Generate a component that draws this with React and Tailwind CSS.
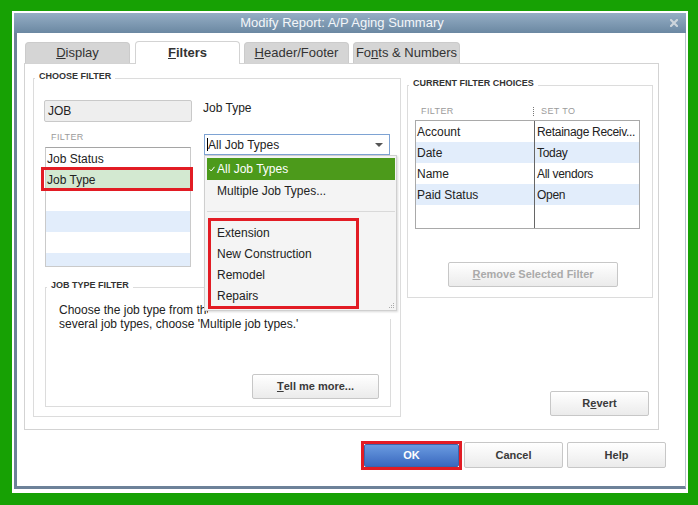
import React from 'react';

const listRows = [
  { label: 'Job Status', tone: 'white' },
  { label: 'Job Type', tone: 'selected' },
  { label: '', tone: 'white' },
  { label: '', tone: 'blue' },
  { label: '', tone: 'white' },
  { label: '', tone: 'blue' },
];

const currentFilters = [
  { filter: 'Account', setTo: 'Retainage Receiv...' },
  { filter: 'Date', setTo: 'Today' },
  { filter: 'Name', setTo: 'All vendors' },
  { filter: 'Paid Status', setTo: 'Open' },
];

const jobTypes = ['Extension', 'New Construction', 'Remodel', 'Repairs'];

function Btn({ className = '', disabled, children }) {
  return (
    <div
      className={`flex items-center justify-center rounded-[2px] border border-[#c7c7c7] bg-linear-to-b from-white to-[#ebebeb] text-[11px] font-bold ${
        disabled ? 'text-[#aaaaaa]' : 'text-[#3a3a3a]'
      } ${className}`}
    >
      {children}
    </div>
  );
}

function Legend({ children }) {
  return (
    <legend className="ml-[1px] px-[4px] pb-[5px] text-[9px] leading-[10px] font-bold text-[#333]">
      {children}
    </legend>
  );
}

function Tab({ active, className = '', children }) {
  return (
    <div
      className={`flex items-center justify-center rounded-t-[4px] text-[13px] text-[#333] ${
        active
          ? 'relative z-10 -mb-px h-[23px] border border-b-0 border-[#d3d3d3] bg-white font-bold'
          : 'h-[21px] border border-b-0 border-[#cbcbcb] bg-[#d5d5d5]'
      } ${className}`}
    >
      {children}
    </div>
  );
}

export default function App() {
  return (
    <div className="w-[698px] h-[505px] bg-[#17a104] pt-[11px] pl-[12px] pr-[10px] pb-[12px] font-[Liberation_Sans,Arial,sans-serif] text-[12px] text-[#222]">
      <div className="h-full bg-white p-[2px] pb-[4px]">
        <div className="h-full flex flex-col">
          {/* Title bar */}
          <div className="h-[20px] shrink-0 flex items-center bg-linear-to-b from-[#95aec5] to-[#6b88a2]">
            <div className="flex-1 text-center text-[13px] text-[#f3f6f9]">Modify Report: A/P Aging Summary</div>
            <div className="w-[16px] flex items-center">
              <svg width="8" height="8" viewBox="0 0 8 8">
                <path d="M1 1L7 7M7 1L1 7" stroke="#cdd5dc" strokeWidth="2.2" strokeLinecap="square" />
              </svg>
            </div>
          </div>

          {/* Body */}
          <div className="flex-1 flex flex-col border-l-[3px] border-b-[3px] border-r border-l-[#6d8299] border-b-[#6d8299] border-r-[#b9c3cd] pt-[8px] pl-[7px]">
            {/* Tabs */}
            <div className="flex items-end h-[22px] pl-[1px]">
              <Tab className="w-[105px]">
                <span className="underline">D</span>isplay
              </Tab>
              <Tab active className="ml-[5px] w-[105px]">
                <span className="underline">F</span>ilters
              </Tab>
              <Tab className="ml-[4px] w-[105px]">
                <span className="underline">H</span>eader/Footer
              </Tab>
              <Tab className="ml-[4px] w-[107px]">
                Fo<span className="underline">n</span>ts &amp; Numbers
              </Tab>
            </div>

            {/* Tab panel */}
            <div className="w-[635px] h-[367px] border border-[#d3d3d3] flex pt-[7px] pl-[8px] pb-[12px]">
              {/* Choose filter */}
              <fieldset className="w-[368px] h-[346px] border border-[#dcdcdc]">
                <Legend>CHOOSE FILTER</Legend>
                <div className="flex items-start mt-[14px] ml-[10px]">
                  <div className="w-[148px] h-[22px] bg-[#eeeeee] border border-[#c9c9c9] rounded-[2px] flex items-center pl-[3px]">
                    JOB
                  </div>
                  <div className="ml-[11px] mt-[1px] leading-[14px]">Job Type</div>
                </div>

                <div className="flex ml-[11px]">
                  <div className="relative w-[146px]">
                    <div className="mt-[10px] pl-[6px] text-[9px] leading-[10px] text-[#9b9b9b] tracking-[0.4px]">FILTER</div>
                    <div className="mt-[5px] h-[120px] border border-[#cacaca] border-t-[#a5a5a5] overflow-hidden">
                      {listRows.map((row, i) => (
                        <div
                          key={i}
                          className={`h-[21px] flex items-center pl-[1px] ${
                            row.tone === 'blue' ? 'bg-[#e2edfb]' : row.tone === 'selected' ? 'bg-[#d3e9d1]' : 'bg-white'
                          }`}
                        >
                          {row.label}
                        </div>
                      ))}
                    </div>
                    <div className="absolute left-[-4px] top-[45px] w-[152px] h-[24px] border-[3px] border-[#e21c24]" />
                  </div>

                  <div className="relative ml-[13px] mt-[12px]">
                    <div className="w-[186px] h-[21px] border border-[#7ea3d3] bg-white flex items-center pl-[2px]">
                      <span className="w-px h-[13px] bg-black" />
                      <span>All Job Types</span>
                      <svg className="ml-auto mr-[6px]" width="8" height="4" viewBox="0 0 8 4">
                        <path d="M0 0H8L4 4Z" fill="#555" />
                      </svg>
                    </div>

                    {/* Open dropdown (popup, with its blank shadow strip below) */}
                    <div className="absolute left-0 top-[21px] z-20 w-[194px]">
                      <div className="relative w-[193px] h-[156px] bg-[#f4f4f4] border border-[#cfcfcf] shadow-[1px_1px_2px_rgba(0,0,0,0.15)] pt-[2px] pl-[2px] pr-[1px]">
                        <div className="h-[22px] bg-[#4c9a1b] text-white flex items-center">
                          <span className="w-[10px] flex justify-center">
                            <svg width="6" height="6" viewBox="0 0 6 6">
                              <path d="M0.5 3.2L2.2 5L5.5 0.8" stroke="white" strokeWidth="1" fill="none" />
                            </svg>
                          </span>
                          <span>All Job Types</span>
                        </div>
                        <div className="h-[21px] flex items-center pl-[10px]">Multiple Job Types...</div>
                        <div className="mt-[10px] h-px bg-[#d9d9d9]" />
                        <div className="mt-[10px]">
                          {jobTypes.map((t) => (
                            <div key={t} className="h-[21px] flex items-center pl-[10px]">
                              {t}
                            </div>
                          ))}
                        </div>
                        <div className="absolute left-[3px] top-[62px] w-[151px] h-[91px] border-[3px] border-[#e21c24]" />
                        <svg className="absolute right-[1px] bottom-[1px]" width="6" height="6" viewBox="0 0 6 6">
                          <rect x="4" y="0" width="1" height="1" fill="#aaa" />
                          <rect x="2" y="2" width="1" height="1" fill="#aaa" />
                          <rect x="4" y="2" width="1" height="1" fill="#aaa" />
                          <rect x="0" y="4" width="1" height="1" fill="#aaa" />
                          <rect x="2" y="4" width="1" height="1" fill="#aaa" />
                          <rect x="4" y="4" width="1" height="1" fill="#aaa" />
                        </svg>
                      </div>
                      <div className="ml-[4px] h-[8px] bg-white" />
                    </div>
                  </div>
                </div>

                {/* Job type filter help */}
                <fieldset className="ml-[11px] mt-[13px] w-[346px] h-[127px] border border-[#dcdcdc]">
                  <Legend>JOB TYPE FILTER</Legend>
                  <div className="h-[111px] flex flex-col">
                    <p className="mt-[8px] pl-[13px] w-[333px] leading-[14px]">
                      Choose the job type from the drop-down list. To select several job types, choose 'Multiple job types.'
                    </p>
                    <Btn className="mt-auto mb-[7px] self-end mr-[11px] w-[127px] h-[25px]">
                      <span className="underline">T</span>ell me more...
                    </Btn>
                  </div>
                </fieldset>
              </fieldset>

              {/* Current filter choices */}
              <div className="ml-[6px] w-[251px] flex flex-col">
                <fieldset className="mt-[7px] w-[246px] h-[220px] border border-[#dcdcdc]">
                  <Legend>CURRENT FILTER CHOICES</Legend>
                  <div className="mt-[13px] ml-[7px] w-[225px]">
                    <div className="flex items-center h-[10px] text-[9px] leading-[10px] text-[#9b9b9b] tracking-[0.4px]">
                      <div className="w-[118px] pl-[6px]">FILTER</div>
                      <div className="h-[9px] border-l border-dotted border-[#777]" />
                      <div className="pl-[7px]">SET TO</div>
                    </div>
                    <div className="mt-[4px] h-[109px] border border-[#a9a9a9] flex flex-col">
                      {currentFilters.map((f, i) => (
                        <div key={f.filter} className={`h-[21px] flex ${i % 2 ? 'bg-[#e2edfb]' : 'bg-white'}`}>
                          <div className="w-[119px] border-r border-[#666] pl-[1px] flex items-center">{f.filter}</div>
                          <div className="flex-1 pl-[2px] flex items-center whitespace-nowrap overflow-hidden tracking-[-0.3px]">
                            {f.setTo}
                          </div>
                        </div>
                      ))}
                      <div className="flex-1 flex">
                        <div className="w-[119px] border-r border-[#666]" />
                      </div>
                    </div>
                  </div>
                  <Btn disabled className="mt-[33px] ml-[40px] w-[170px] h-[25px]">
                    <span className="underline">R</span>emove Selected Filter
                  </Btn>
                </fieldset>
                <Btn className="mt-auto mb-[1px] self-end mr-[9px] w-[99px] h-[25px]">
                  R<span className="underline">e</span>vert
                </Btn>
              </div>
            </div>

            {/* Dialog buttons */}
            <div className="mt-[11px] flex items-start justify-end pr-[19px]">
              <div className="w-[101px] h-[29px] border-[3px] border-[#e21c24]">
                <div className="h-full rounded-[2px] bg-linear-to-b from-[#6a9be0] to-[#3b69bf] border border-[#3d64aa] flex items-center justify-center text-white font-bold text-[11px]">
                  OK
                </div>
              </div>
              <Btn className="ml-[2px] mt-[1px] w-[99px] h-[26px]">Cancel</Btn>
              <Btn className="ml-[4px] mt-[1px] w-[99px] h-[26px]">Help</Btn>
            </div>
          </div>
        </div>
      </div>
    </div>
  );
}
